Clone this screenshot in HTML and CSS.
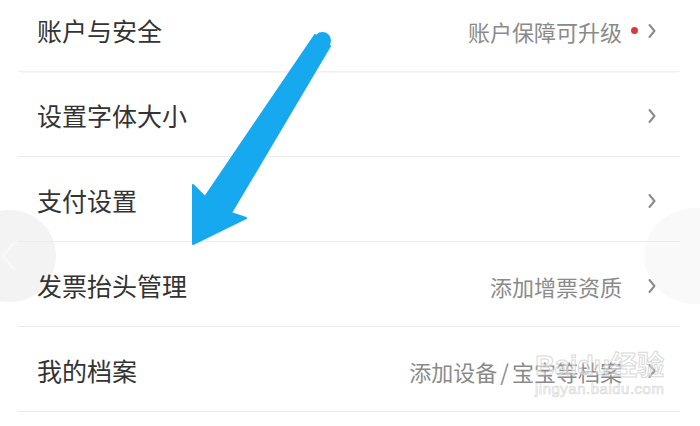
FILE: index.html
```html
<!DOCTYPE html>
<html lang="zh-CN">
<head>
    <meta charset="UTF-8">
    <meta name="viewport" content="width=device-width, initial-scale=1.0">
    <title>设置</title>
    <link rel="stylesheet" href="styles.css">
</head>
<body>

<div class="page">
    <div class="edge edge-left">
        <svg width="30" height="40" viewBox="0 0 30 40"><path d="M18 7 L7 20 L18 33" fill="none" stroke="#f8f8f8" stroke-width="3" stroke-linecap="round" stroke-linejoin="round"/></svg>
    </div>
    <div class="edge edge-right"></div>

    <ul class="settings">
        <li class="row">
            <span class="title">账户与安全</span>
            <span class="extra">账户保障可升级</span>
            <span class="dot"></span>
            <svg class="chevron" width="8" height="16" viewBox="0 0 8 16"><path d="M1.5 2 L6.5 8 L1.5 14" fill="none" stroke="#8a8a8a" stroke-width="2" stroke-linecap="round" stroke-linejoin="round"/></svg>
        </li>
        <li class="row">
            <span class="title">设置字体大小</span>
            <svg class="chevron" width="8" height="16" viewBox="0 0 8 16"><path d="M1.5 2 L6.5 8 L1.5 14" fill="none" stroke="#8a8a8a" stroke-width="2" stroke-linecap="round" stroke-linejoin="round"/></svg>
        </li>
        <li class="row">
            <span class="title">支付设置</span>
            <svg class="chevron" width="8" height="16" viewBox="0 0 8 16"><path d="M1.5 2 L6.5 8 L1.5 14" fill="none" stroke="#8a8a8a" stroke-width="2" stroke-linecap="round" stroke-linejoin="round"/></svg>
        </li>
        <li class="row">
            <span class="title">发票抬头管理</span>
            <span class="extra gap">添加增票资质</span>
            <svg class="chevron" width="8" height="16" viewBox="0 0 8 16"><path d="M1.5 2 L6.5 8 L1.5 14" fill="none" stroke="#8a8a8a" stroke-width="2" stroke-linecap="round" stroke-linejoin="round"/></svg>
        </li>
        <li class="row">
            <span class="title">我的档案</span>
            <span class="extra gap">添加设备<span class="slash">/</span>宝宝等档案</span>
            <svg class="chevron" width="8" height="16" viewBox="0 0 8 16"><path d="M1.5 2 L6.5 8 L1.5 14" fill="none" stroke="#8a8a8a" stroke-width="2" stroke-linecap="round" stroke-linejoin="round"/></svg>
        </li>
    </ul>

    <!-- blue arrow drawn over the screenshot -->
    <svg class="arrow" width="700" height="426" viewBox="0 0 700 426">
        <path d="M315 35 L205 197 L193 185 L193 244 L246 218 L231 213 L330 46 Z" fill="#17a9ef" stroke="#17a9ef" stroke-width="2" stroke-linejoin="round"/>
        <circle cx="322.5" cy="40.5" r="8.5" fill="#17a9ef"/>
    </svg>

    <div class="watermark">
        <div class="wm-logo">Bai<span class="paw">du</span>经验</div>
        <div class="wm-url">jingyan.baidu.com</div>
    </div>
</div>

</body>
</html>
```

FILE: styles.css
```css
body {
    margin: 0;
    padding: 0;
    background-color: #fff;
    font-family: "Noto Sans CJK SC", "Noto Sans", sans-serif;
    overflow: hidden;
}
.page {
    position: relative;
    width: 700px;
    height: 426px;
    overflow: hidden;
}
.settings {
    list-style: none;
    margin: -13px 20px 0 18px;
    padding: 0;
    position: relative;
    z-index: 1;
}
.row {
    display: flex;
    align-items: center;
    height: 85px;
    box-sizing: border-box;
    padding: 3px 24px 0 19px;
    border-bottom: 1px solid #ebebeb;
}
.row:first-child {
    border-bottom-color: #f0f0f0;
    box-shadow: 0 5px 0 -4px #f5f5f5;
}
.title {
    flex: 1;
    font-size: 25px;
    color: #333;
    line-height: 1;
}
.extra {
    font-size: 22px;
    color: #8a8a8a;
    line-height: 1;
}
.extra.gap {
    margin-right: 26px;
}
.slash {
    padding: 0 3px;
}
.dot {
    width: 7px;
    height: 7px;
    border-radius: 50%;
    background-color: #d93a3a;
    margin: 0 10px 0 9px;
}
.chevron {
    display: block;
}
.edge {
    position: absolute;
    border-radius: 50%;
    z-index: 0;
}
.edge-left {
    left: -36px;
    top: 210px;
    width: 92px;
    height: 92px;
    background-color: #f3f3f3;
    display: flex;
    align-items: center;
    justify-content: flex-end;
}
.edge-left svg {
    margin-right: 30px;
}
.edge-right {
    left: 644px;
    top: 208px;
    width: 104px;
    height: 96px;
    background-color: #f9f9f9;
}
.arrow {
    position: absolute;
    left: 0;
    top: 0;
    z-index: 2;
    pointer-events: none;
}
.watermark {
    position: absolute;
    left: 535px;
    top: 352px;
    z-index: 3;
    color: rgba(255, 255, 255, 0.5);
    -webkit-text-stroke: 1px rgba(190, 190, 190, 0.6);
    font-family: "Liberation Sans", "Noto Sans CJK SC", sans-serif;
    text-align: center;
}
.wm-logo {
    font-size: 27px;
    font-weight: bold;
    line-height: 28px;
}
.wm-url {
    font-size: 15px;
    line-height: 18px;
    letter-spacing: 0.5px;
    -webkit-text-stroke: 0.7px rgba(190, 190, 190, 0.6);
}
```
